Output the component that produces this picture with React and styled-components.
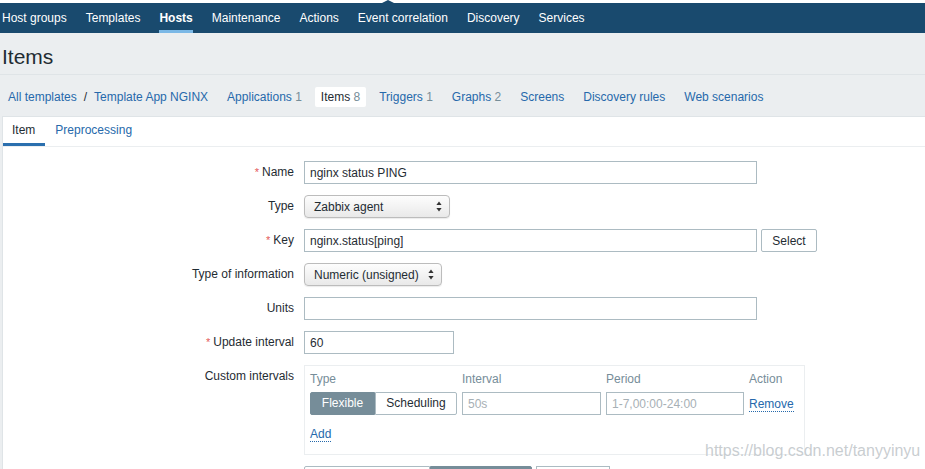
import styled, { createGlobalStyle } from "styled-components";

const GlobalStyle = createGlobalStyle`
  html, body {
    margin: 0;
    padding: 0;
  }
  body {
    background: #fff;
    font-family: "Liberation Sans", Arial, sans-serif;
    font-size: 12px;
    color: #1f2c33;
    overflow: hidden;
  }
  * {
    box-sizing: border-box;
  }
`;

const navItems = [
  "Host groups",
  "Templates",
  "Hosts",
  "Maintenance",
  "Actions",
  "Event correlation",
  "Discovery",
  "Services",
];

const crumbs = [
  { label: "Applications", count: 1 },
  { label: "Items", count: 8, active: true },
  { label: "Triggers", count: 1 },
  { label: "Graphs", count: 2 },
  { label: "Screens" },
  { label: "Discovery rules" },
  { label: "Web scenarios" },
];

// 上下箭头（mac 原生 select 样式）
const SelectArrows = () => (
  <svg width="6" height="11" viewBox="0 0 6 11">
    <path d="M3 0.5 L5.6 4 L0.4 4 Z" fill="#333" />
    <path d="M3 10.5 L5.6 7 L0.4 7 Z" fill="#333" />
  </svg>
);

const App = () => {
  return (
    <>
      <GlobalStyle />
      <Page>
        <TopNav>
          {navItems.map(el => (
            <NavItem key={el} $active={el === "Hosts"}>
              {el}
            </NavItem>
          ))}
        </TopNav>

        <Header>
          <Title>Items</Title>
        </Header>

        <Breadcrumbs>
          <Path>
            <PathLink>All templates</PathLink>
            <span>/</span>
            <PathLink>Template App NGINX</PathLink>
          </Path>
          {crumbs.map(el => (
            <Crumb key={el.label} $active={el.active}>
              {el.label}
              {el.count !== undefined && <Count> {el.count}</Count>}
            </Crumb>
          ))}
        </Breadcrumbs>

        <Panel>
          <Tabs>
            <Tab $active>Item</Tab>
            <Tab>Preprocessing</Tab>
          </Tabs>

          <FormGrid>
            <Label $required>Name</Label>
            <Field>
              <Input $w={453} defaultValue="nginx status PING" />
            </Field>

            <Label>Type</Label>
            <Field>
              <Select $w={146}>
                Zabbix agent
                <SelectArrows />
              </Select>
            </Field>

            <Label $required>Key</Label>
            <Field>
              <Input $w={453} defaultValue="nginx.status[ping]" />
              <Button>Select</Button>
            </Field>

            <Label>Type of information</Label>
            <Field>
              <Select $w={138}>
                Numeric (unsigned)
                <SelectArrows />
              </Select>
            </Field>

            <Label>Units</Label>
            <Field>
              <Input $w={453} />
            </Field>

            <Label $required>Update interval</Label>
            <Field>
              <Input $w={150} defaultValue="60" />
            </Field>

            <Label>Custom intervals</Label>
            <Field>
              <IntervalBox>
                <IntervalGrid>
                  <ColHead>Type</ColHead>
                  <ColHead>Interval</ColHead>
                  <ColHead>Period</ColHead>
                  <ColHead>Action</ColHead>

                  <Segmented>
                    <SegButton $w={65} $active>
                      Flexible
                    </SegButton>
                    <SegButton $w={82}>Scheduling</SegButton>
                  </Segmented>
                  <Input $w={139} placeholder="50s" />
                  <Input $w={138} placeholder="1-7,00:00-24:00" />
                  <div>
                    <Link>Remove</Link>
                  </div>
                </IntervalGrid>
                <AddRow>
                  <Link>Add</Link>
                </AddRow>
              </IntervalBox>
            </Field>

            {/* 下一行只露出顶边，文字在画面外 */}
            <Label />
            <Field>
              <Segmented>
                <SegButton $w={126} />
                <SegButton $w={102} $active />
              </Segmented>
              <Input $w={74} />
            </Field>
          </FormGrid>
        </Panel>

        <Watermark>https://blog.csdn.net/tanyyinyu</Watermark>
      </Page>
    </>
  );
};

const Page = styled.div`
  position: relative;
  height: 469px;
  padding-top: 3px;
  background: #ebeef0;
  box-shadow: inset 0 3px 0 #fff;
  overflow: hidden;
`;

const TopNav = styled.nav`
  position: relative;
  display: flex;
  gap: 19px;
  height: 30px;
  padding-left: 2px;
  background: #194a6e;

  &::before {
    content: "";
    position: absolute;
    left: 382px;
    top: -3px;
    border-left: 6px solid transparent;
    border-right: 6px solid transparent;
    border-bottom: 3px solid #194a6e;
  }
`;

const NavItem = styled.a`
  height: 30px;
  line-height: 30px;
  color: #fff;
  white-space: nowrap;
  font-weight: ${p => (p.$active ? "bold" : "normal")};
  box-shadow: ${p => (p.$active ? "inset 0 -3px 0 #7bb8e6" : "none")};
`;

const Header = styled.div`
  height: 42px;
  padding: 6px 0 0 2px;
  border-bottom: 1px solid #dfe4e7;
`;

const Title = styled.h1`
  margin: 0;
  font-size: 21px;
  font-weight: normal;
  line-height: 35px;
  color: #1f2c33;
`;

const Breadcrumbs = styled.div`
  display: flex;
  align-items: center;
  gap: 7px;
  height: 41px;
  padding: 3px 0 0 2px;
`;

const Path = styled.div`
  display: flex;
  gap: 7px;
  padding: 0 6px;
  line-height: 20px;
  white-space: nowrap;
`;

const PathLink = styled.a`
  color: #2669ab;
`;

const Crumb = styled.a`
  height: 20px;
  line-height: 20px;
  padding: 0 6px;
  border-radius: 2px;
  white-space: nowrap;
  color: ${p => (p.$active ? "#1f2c33" : "#2669ab")};
  background: ${p => (p.$active ? "#fff" : "transparent")};
`;

const Count = styled.span`
  color: #768d99;
`;

const Panel = styled.div`
  margin-left: 2px;
  height: 360px;
  background: #fff;
  border: 1px solid #dfe4e7;
  border-right: none;
`;

const Tabs = styled.div`
  display: flex;
  border-bottom: 1px solid #ebeef0;
`;

const Tab = styled.a`
  height: 29px;
  line-height: 26px;
  padding: 0 10px 0 ${p => (p.$active ? "9px" : "10px")};
  color: ${p => (p.$active ? "#1f2c33" : "#2669ab")};
  border-bottom: 3px solid ${p => (p.$active ? "#2b6fae" : "transparent")};
`;

const FormGrid = styled.div`
  display: grid;
  grid-template-columns: 291px 1fr;
  column-gap: 10px;
  row-gap: 11px;
  padding-top: 14px;
`;

const Label = styled.label`
  text-align: right;
  line-height: 23px;
  white-space: nowrap;

  &::before {
    content: ${p => (p.$required ? '"* "' : "none")};
    color: #e45959;
    font-size: 11px;
  }
`;

const Field = styled.div`
  display: flex;
  align-items: flex-start;
  gap: 4px;
`;

const Input = styled.input`
  width: ${p => p.$w}px;
  height: 23px;
  padding: 0 5px;
  border: 1px solid #acbbc2;
  border-radius: 0;
  font: inherit;
  color: #1f2c33;
  background: #fff;
  outline: none;

  &::placeholder {
    color: #a7b0b5;
  }
`;

const Select = styled.div`
  width: ${p => p.$w}px;
  height: 23px;
  display: flex;
  align-items: center;
  justify-content: space-between;
  padding: 0 7px 0 9px;
  border: 1px solid #bcbcbc;
  border-radius: 4px;
  background: linear-gradient(#fdfdfd, #e9e9e9);
  box-shadow: 0 1px 1px rgba(0, 0, 0, 0.08);
  color: #1f2c33;
  white-space: nowrap;
`;

const Button = styled.button`
  width: 56px;
  height: 23px;
  padding: 0;
  border: 1px solid #acbbc2;
  border-radius: 2px;
  background: #fff;
  font: inherit;
  color: #1f2c33;
`;

const IntervalBox = styled.div`
  width: 501px;
  padding: 4px 5px 11px 5px;
  border: 1px solid #ebeef0;
`;

const IntervalGrid = styled.div`
  display: grid;
  grid-template-columns: 147px 139px 138px auto;
  column-gap: 5px;
  row-gap: 4px;
  align-items: center;
`;

const ColHead = styled.div`
  line-height: 18px;
  color: #768d99;
`;

const Segmented = styled.div`
  display: flex;
`;

const SegButton = styled.div`
  width: ${p => p.$w}px;
  height: 23px;
  line-height: 21px;
  text-align: center;
  white-space: nowrap;
  border: 1px solid ${p => (p.$active ? "#768d99" : "#acbbc2")};
  background: ${p => (p.$active ? "#768d99" : "#fff")};
  color: ${p => (p.$active ? "#fff" : "#1f2c33")};

  &:first-child {
    border-radius: 2px 0 0 2px;
  }
  &:last-child {
    border-radius: 0 2px 2px 0;
  }
`;

const Link = styled.a`
  color: #2669ab;
  border-bottom: 1px dotted #2669ab;
`;

const AddRow = styled.div`
  margin-top: 10px;
  line-height: 18px;
`;

const Watermark = styled.div`
  position: absolute;
  left: 705px;
  top: 442px;
  font-size: 16px;
  color: rgba(190, 196, 200, 0.85);
  text-shadow: 0 0 2px #fff;
  pointer-events: none;
`;

export default App;
